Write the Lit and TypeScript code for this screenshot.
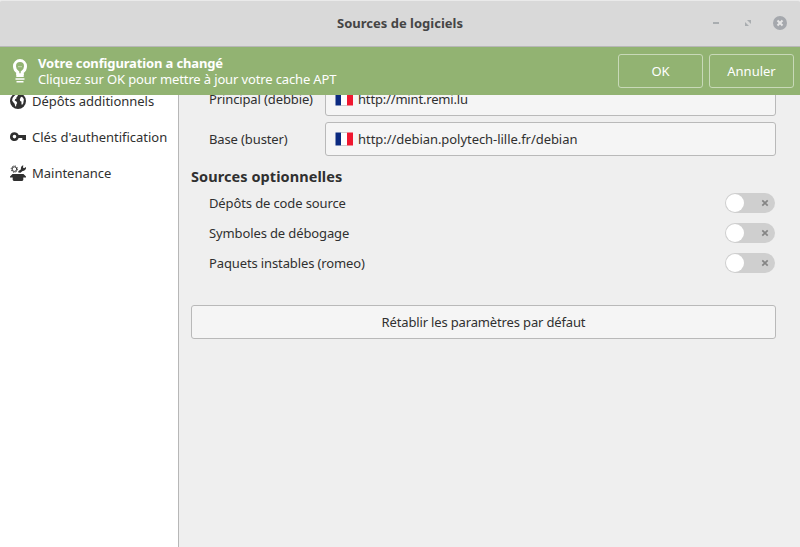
import { LitElement, html, css, svg } from "lit";
import { customElement, property } from "lit/decorators.js";

const bulb = svg`<path fill="none" stroke="#fff" stroke-width="3" d="M5.800 17V14.300C3.500 12.700 2.500 11 2.500 8.200a5.500 5.700 0 0 1 11 0c0 2.800-1 4.500-3.300 6.100V17"/><path fill="#fff" d="M4.300 15.200h7.400V19H4.300zM3.500 20.300h9v1.400h-9zM4.500 23h7v1.400h-7z"/><path fill="#fff" opacity=".5" d="M6 8.200h4v1H6z"/>`;

const globe = svg`<circle cx="8" cy="8" r="8" fill="#303030"/><path fill="#fff" d="M6 1.700 8 2 7.500 3.200 6.400 4.200 6.600 5.200 5.100 6.200 4.700 7.500 6.400 8.500 7.200 10 6.300 11.500 6.100 13.200 5.300 13.400 4.600 10.800 3.100 9 2.100 7.400 2.600 5 4.200 2.900zM10.600 4.500 11.800 3.700 13 4.700 13.900 6.500 13.500 8.500 13.300 10.200 12.200 11.700 11.700 11.700 11.400 10 11.600 8.800 10.200 8 9.800 6.600z"/>`;

const key = svg`<path fill="#303030" fill-rule="evenodd" d="M4.500 3.200A4.400 4.400 0 0 1 8.600 6H16v5h-3.700V9H8.600A4.400 4.400 0 1 1 4.500 3.200zM4.500 5.800a1.800 1.800 0 1 0 0 3.600 1.800 1.800 0 0 0 0-3.600z"/>`;

const tools = svg`<path fill="#303030" d="M2.500 9h11L16 11.500V12.500h-2.700V15l-1 1H3.700l-1-1v-2.500H0v-1z"/><circle cx="4.400" cy="4.100" r="2.300" fill="none" stroke="#303030" stroke-width="1"/><circle cx="4.400" cy="4.100" r="3.200" fill="none" stroke="#303030" stroke-width="1" stroke-dasharray="1.200 1.313"/><path fill="#303030" d="M8.300 7.500V6.200L11 4.300C10.500 2.400 11.500.8 13.300.3L13 2.400l1 .9L16 2v1.600C15.500 5.300 14 6 12.600 5.900L10.500 7.800z"/>`;

@customElement("list-entry")
class ListEntry extends LitElement {
  static styles = css`
    :host { display: flex; align-items: center; height: 36px; padding-left: 10px; gap: 6px; white-space: nowrap; }
    svg { width: 16px; height: 16px; flex: none; }
    span { letter-spacing: -.02px; }
  `;
  @property({ attribute: false }) icon: unknown;
  render() {
    return html`<svg viewBox="0 0 16 16">${this.icon}</svg><span><slot></slot></span>`;
  }
}

@customElement("mirror-row")
class MirrorRow extends LitElement {
  static styles = css`
    :host { display: flex; align-items: center; height: 34px; margin-bottom: 6px; white-space: nowrap; }
    .label { width: 116px; padding-left: 18px; flex: none; letter-spacing: -.12px; }
    .combo { flex: 1; height: 34px; box-sizing: border-box; border: 1px solid #b9b9b9; border-radius: 3px; background: #f5f5f5; display: flex; align-items: center; padding-left: 9px; gap: 5px; }
    svg { width: 18px; height: 14px; }
    .url { letter-spacing: -.05px; }
    :host([compact]) .url { letter-spacing: -.17px; }
  `;
  @property() label = "";
  @property() url = "";
  render() {
    return html`<span class="label">${this.label}</span>
      <div class="combo">
        <svg viewBox="0 0 18 14"><path fill="#fff" d="M6 .500h6v13H6z"/><path fill="#0b2a80" d="M.500.500H6V13.500H.500z"/><path fill="#f0172f" d="M12 .500h6V13.500H12z"/><path fill="#cfcfcf" d="M6 13h6v1H6zM6 0h6v1H6z"/></svg>
        <span class="url">${this.url}</span>
      </div>`;
  }
}

@customElement("option-row")
class OptionRow extends LitElement {
  static styles = css`
    :host { display: flex; align-items: center; justify-content: space-between; height: 30px; padding: 0 1px 0 18px; letter-spacing: -.12px; }
    .switch { width: 50px; height: 20px; box-sizing: border-box; border-radius: 10px; background: #cfcfcf; display: flex; align-items: center; justify-content: space-between; padding: 0 6px 0 1px; }
    .knob { width: 18px; height: 18px; border-radius: 50%; background: #fff; }
    svg { width: 8px; height: 8px; }
  `;
  render() {
    return html`<span><slot></slot></span>
      <div class="switch"><div class="knob"></div>
        <svg viewBox="0 0 8 8"><path d="M1.300 1.300 6.700 6.700M6.700 1.300 1.300 6.700" stroke="#858585" stroke-width="1.700"/></svg>
      </div>`;
  }
}

@customElement("app-root")
class AppRoot extends LitElement {
  static styles = css`
    :host { display: flex; flex-direction: column; height: 547px; width: 800px; overflow: hidden; background: #efefef; color: #303030; font: 13px/18px "Noto Sans", "Open Sans", sans-serif; }
    header { height: 47px; box-sizing: border-box; flex: none; background: #d9d9d9; border-top: 1px solid #eaeaea; border-bottom: 1px solid #b7b7b7; border-radius: 2px 2px 0 0; display: grid; grid-template-columns: 1fr auto 1fr; align-items: center; padding-bottom: 2px; }
    .title { grid-column: 2; font-weight: 700; color: #454545; }
    .controls { justify-self: end; display: flex; margin-right: 12px; }
    .controls svg { width: 80px; height: 16px; }
    .info { height: 48px; flex: none; box-sizing: border-box; background: #92b372; color: #fff; display: flex; align-items: center; padding: 0 6px 0 12px; }
    .bulb { width: 16px; height: 26px; margin-right: 10px; flex: none; }
    .message { flex: 1; display: flex; flex-direction: column; line-height: 16px; white-space: nowrap; letter-spacing: -.14px; }
    .action { width: 85px; height: 34px; box-sizing: border-box; border: 1px solid #c8d9b8; border-radius: 3px; display: flex; align-items: center; justify-content: center; margin-left: 6px; }
    .body { flex: 1; display: flex; min-height: 0; overflow: hidden; }
    nav { width: 178px; border-right: 1px solid #b7b7b7; background: #fff; }
    .list { margin-top: -12px; }
    main { flex: 1; padding: 0 24px 0 12px; }
    .scrolled { margin-top: -13px; }
    h2 { margin: 10px 0 2px; font-size: 14.500px; line-height: 20px; font-weight: 700; letter-spacing: .07px; }
    .reset { margin-top: 27px; height: 34px; box-sizing: border-box; border: 1px solid #b9b9b9; border-radius: 3px; background: #f5f5f5; display: flex; align-items: center; justify-content: center; letter-spacing: -.15px; }
  `;
  render() {
    return html`
      <header>
        <span class="title">Sources de logiciels</span>
        <div class="controls">
          <svg viewBox="0 0 80 16"><path fill="#a9adb0" d="M5 7h6v2H5zM39 5h4v4zM37 7v4h4z"/><circle cx="72" cy="8" r="7" fill="#a5a8ad"/><path d="m69.500 5.500 5 5m0-5-5 5" stroke="#e6e6e6" stroke-width="2"/></svg>
        </div>
      </header>
      <section class="info">
        <svg class="bulb" viewBox="0 0 16 26">${bulb}</svg>
        <div class="message"><b>Votre configuration a changé</b><span>Cliquez sur OK pour mettre à jour votre cache APT</span></div>
        <div class="action">OK</div>
        <div class="action">Annuler</div>
      </section>
      <div class="body">
        <nav><div class="list">
          <list-entry .icon=${globe}>Dépôts additionnels</list-entry>
          <list-entry .icon=${key}>Clés d'authentification</list-entry>
          <list-entry .icon=${tools}>Maintenance</list-entry>
        </div></nav>
        <main><div class="scrolled">
          <mirror-row compact label="Principal (debbie)" url="http://mint.remi.lu"></mirror-row>
          <mirror-row label="Base (buster)" url="http://debian.polytech-lille.fr/debian"></mirror-row>
          <h2>Sources optionnelles</h2>
          <option-row>Dépôts de code source</option-row>
          <option-row>Symboles de débogage</option-row>
          <option-row>Paquets instables (romeo)</option-row>
          <div class="reset">Rétablir les paramètres par défaut</div>
        </div></main>
      </div>`;
  }
}
